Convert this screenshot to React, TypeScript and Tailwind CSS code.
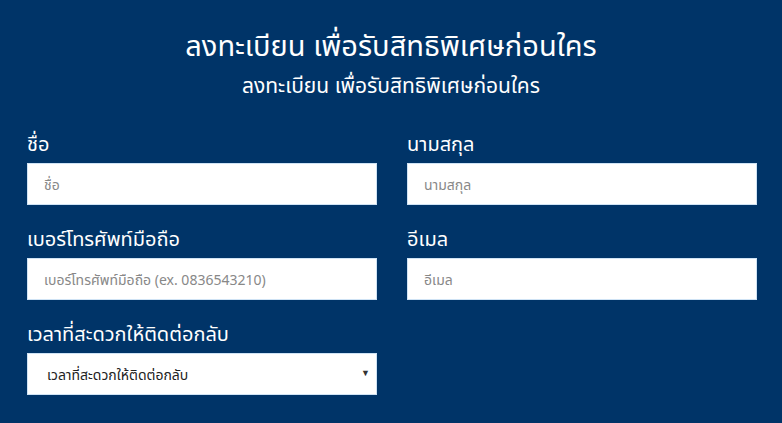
const fields = [
  { label: 'ชื่อ', placeholder: 'ชื่อ' },
  { label: 'นามสกุล', placeholder: 'นามสกุล' },
  { label: 'เบอร์โทรศัพท์มือถือ', placeholder: 'เบอร์โทรศัพท์มือถือ (ex. 0836543210)' },
  { label: 'อีเมล', placeholder: 'อีเมล' },
];

export default function App() {
  return (
    <div
      className="h-[423px] w-[782px] overflow-hidden bg-[#003468] text-white"
      style={{ fontFamily: '"Noto Sans", "Noto Sans Thai", sans-serif' }}
    >
      <div className="pt-[25px] text-center">
        <h1 className="text-[29px] leading-[40px]">ลงทะเบียน เพื่อรับสิทธิพิเศษก่อนใคร</h1>
        <p className="mt-[6px] text-[21px] leading-[28px]">ลงทะเบียน เพื่อรับสิทธิพิเศษก่อนใคร</p>
      </div>

      <form className="mt-[32px] grid grid-cols-[350px_350px] gap-x-[30px] gap-y-[21px] pl-[27px]">
        {fields.map((f) => (
          <div key={f.label}>
            <label className="mb-[6px] block text-[20px] leading-[26px]">{f.label}</label>
            <input
              placeholder={f.placeholder}
              className="h-[42px] w-full border border-[#cfe3f5] bg-white px-[16px] text-[14px] text-gray-700 placeholder:text-[#888] outline-none"
            />
          </div>
        ))}
        <div>
          <label className="mb-[6px] block text-[20px] leading-[26px]">เวลาที่สะดวกให้ติดต่อกลับ</label>
          <div className="relative">
            <select className="h-[42px] w-full appearance-none border border-[#cfe3f5] bg-white pl-[19px] text-[14px] text-[#222] outline-none">
              <option>เวลาที่สะดวกให้ติดต่อกลับ</option>
            </select>
            <span className="pointer-events-none absolute right-[7px] top-[15px] text-[9px] leading-none text-[#333]">▼</span>
          </div>
        </div>
      </form>
    </div>
  );
}
